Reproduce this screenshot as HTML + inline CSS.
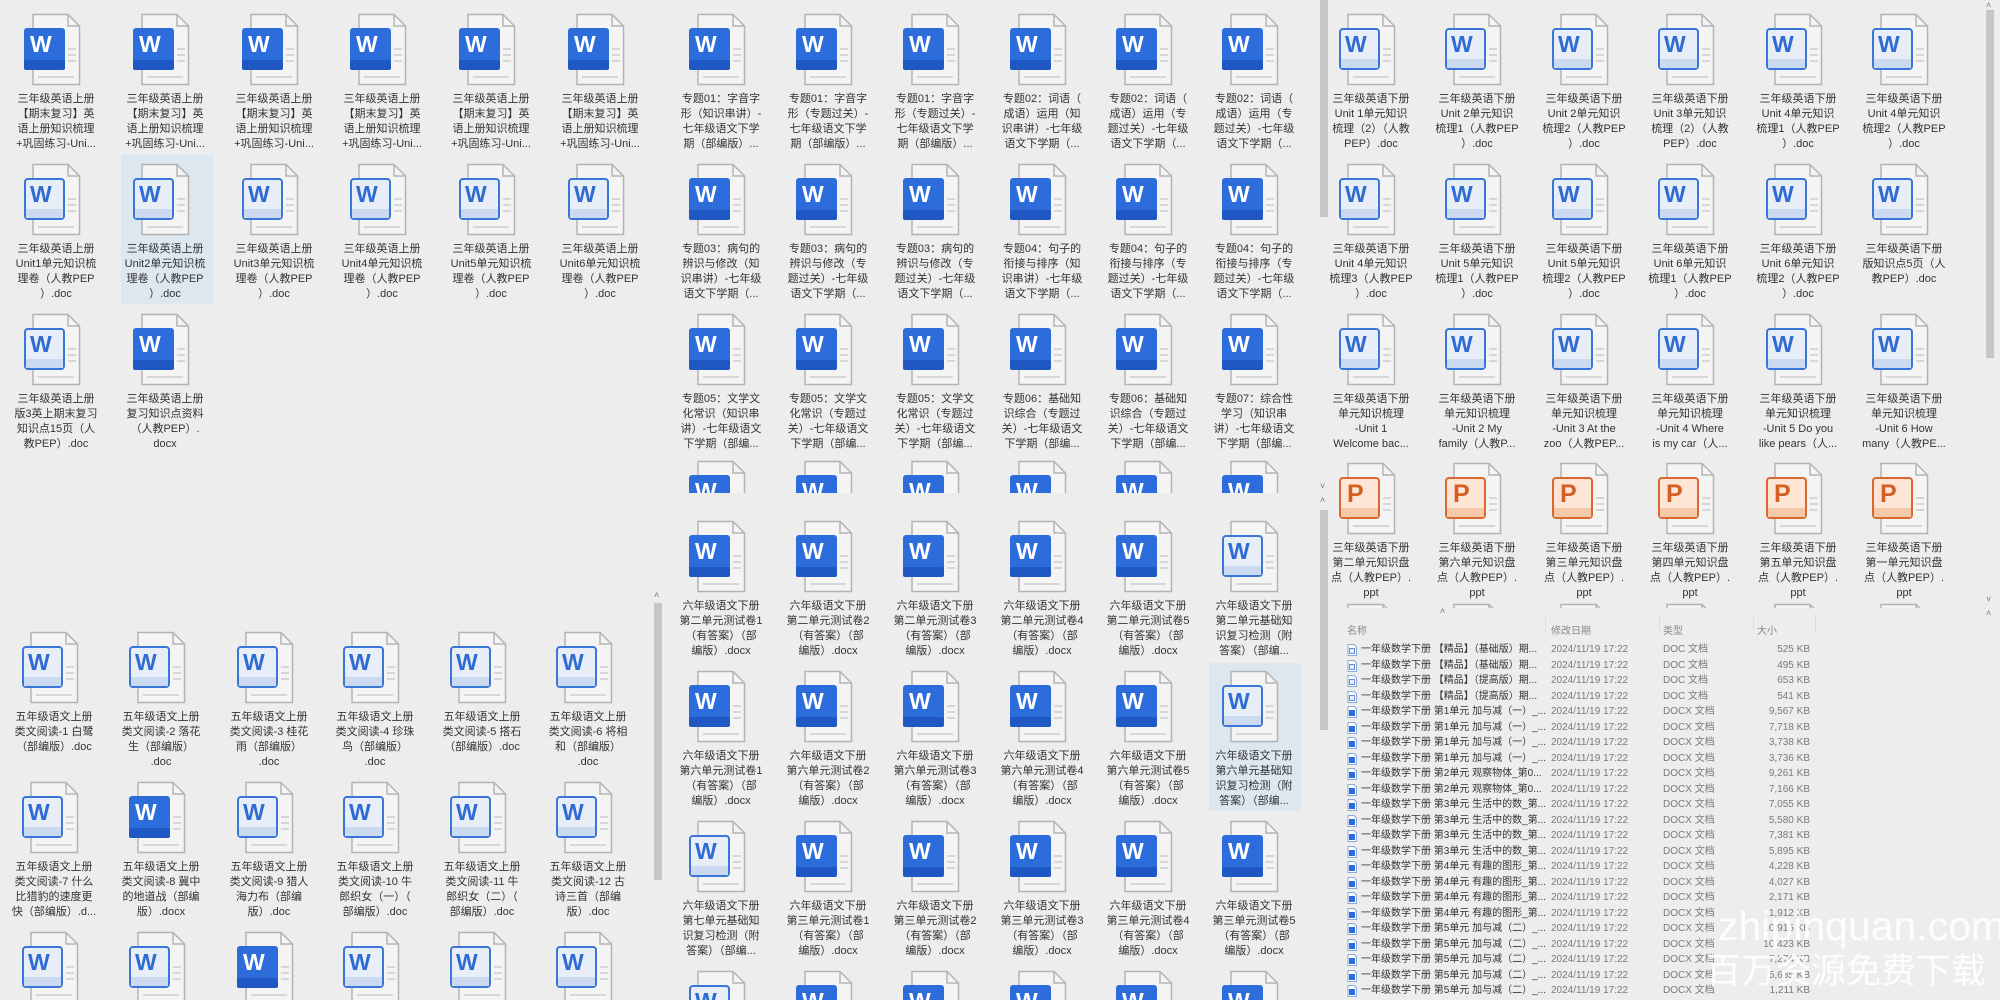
<!DOCTYPE html>
<html><head><meta charset="utf-8"><style>
*{margin:0;padding:0;box-sizing:border-box}
html,body{width:2000px;height:1000px;overflow:hidden}
body{background:#ededed;position:relative;font-family:"Liberation Sans","Noto Sans CJK SC",sans-serif;color:#333}
.c{position:absolute;overflow:hidden}
.i{position:absolute;width:108px;height:150px}
.i svg{position:absolute;left:21px;top:0;width:66px;height:73px}
.i p{position:absolute;top:79px;left:0;width:108px;text-align:center;font-size:11px;line-height:15px;white-space:nowrap}
.sel{position:absolute;background:#dde7f0}
.sb{position:absolute;background:#c6c6c6;width:8px}
.ar{position:absolute;font-size:9px;color:#777}
.hd{position:absolute;top:622px;font-size:10px;color:#8a8a8a}
.r{position:absolute;left:1347px;height:15px;line-height:15px;font-size:10px;white-space:nowrap;width:470px}
.r svg{position:absolute;left:0;top:2px;width:10px;height:12px}
.r .n{position:absolute;left:14px;color:#333}
.r .d{position:absolute;left:204px;color:#7a7a7a}
.r .t{position:absolute;left:316px;color:#7a7a7a}
.r .z{position:absolute;right:7px;color:#7a7a7a}
.sep{position:absolute;top:614px;width:1px;height:18px;background:#ddd}
</style></head><body>
<svg width="0" height="0" style="position:absolute"><defs>
<symbol id="pg" viewBox="0 0 66 73"><path d="M10 1.5H45L56.5 13V71.5H10Z" fill="#f4f4f4" stroke="#b3b3b3" stroke-width="1.5"/><path d="M45 1.5V13H56.5" fill="none" stroke="#b3b3b3" stroke-width="1.5"/><path d="M45 36h8M45 42h8M45 48h8M15 64h36" stroke="#d6d6d6" stroke-width="2"/></symbol>
<symbol id="ws" viewBox="0 0 66 73"><use href="#pg"/><rect x="1" y="15" width="41" height="42" rx="3" fill="#2c6ddb"/><rect x="1" y="47" width="41" height="10" rx="2" fill="#1f58c2"/><text x="7" y="39" font-family="Liberation Sans" font-weight="bold" font-size="23" fill="#fff">W</text></symbol>
<symbol id="wo" viewBox="0 0 66 73"><use href="#pg"/><rect x="2" y="16" width="39" height="40" rx="3" fill="#e8eef8" stroke="#3a76d8" stroke-width="2"/><rect x="3" y="46" width="37" height="9" fill="#cbdaf1"/><text x="7" y="39" font-family="Liberation Sans" font-weight="bold" font-size="23" fill="#2f6bd0">W</text></symbol>
<symbol id="pp" viewBox="0 0 66 73"><use href="#pg"/><rect x="2" y="16" width="39" height="40" rx="3" fill="#fde6d6" stroke="#d9692f" stroke-width="2"/><rect x="3" y="46" width="37" height="9" fill="#f6c8aa"/><text x="9" y="40" font-family="Liberation Sans" font-weight="bold" font-size="25" fill="#d65e22">P</text></symbol>
<symbol id="sd" viewBox="0 0 10 12"><path d="M1 .5H7L9.5 3V11.5H1Z" fill="#fff" stroke="#8aa8d8"/><rect x="2" y="4" width="6" height="6" fill="#2c6ddb"/></symbol>
<symbol id="so" viewBox="0 0 10 12"><path d="M1 .5H7L9.5 3V11.5H1Z" fill="#fff" stroke="#8aa8d8"/><rect x="2.5" y="4.5" width="5" height="5" fill="#e8eef8" stroke="#3a76d8" stroke-width=".8"/></symbol>
</defs></svg>

<!-- top-left -->
<div class="c" style="left:0;top:0;width:676px;height:600px">
<div class="sel" style="left:121px;top:155px;width:92px;height:149px"></div>
<div class="i" style="left:2px;top:13px"><svg><use href="#ws"/></svg><p>三年级英语上册<br>【期末复习】英<br>语上册知识梳理<br>+巩固练习-Uni...</p></div>
<div class="i" style="left:111px;top:13px"><svg><use href="#ws"/></svg><p>三年级英语上册<br>【期末复习】英<br>语上册知识梳理<br>+巩固练习-Uni...</p></div>
<div class="i" style="left:220px;top:13px"><svg><use href="#ws"/></svg><p>三年级英语上册<br>【期末复习】英<br>语上册知识梳理<br>+巩固练习-Uni...</p></div>
<div class="i" style="left:328px;top:13px"><svg><use href="#ws"/></svg><p>三年级英语上册<br>【期末复习】英<br>语上册知识梳理<br>+巩固练习-Uni...</p></div>
<div class="i" style="left:437px;top:13px"><svg><use href="#ws"/></svg><p>三年级英语上册<br>【期末复习】英<br>语上册知识梳理<br>+巩固练习-Uni...</p></div>
<div class="i" style="left:546px;top:13px"><svg><use href="#ws"/></svg><p>三年级英语上册<br>【期末复习】英<br>语上册知识梳理<br>+巩固练习-Uni...</p></div>
<div class="i" style="left:2px;top:163px"><svg><use href="#wo"/></svg><p>三年级英语上册<br>Unit1单元知识梳<br>理卷（人教PEP<br>）.doc</p></div>
<div class="i" style="left:111px;top:163px"><svg><use href="#wo"/></svg><p>三年级英语上册<br>Unit2单元知识梳<br>理卷（人教PEP<br>）.doc</p></div>
<div class="i" style="left:220px;top:163px"><svg><use href="#wo"/></svg><p>三年级英语上册<br>Unit3单元知识梳<br>理卷（人教PEP<br>）.doc</p></div>
<div class="i" style="left:328px;top:163px"><svg><use href="#wo"/></svg><p>三年级英语上册<br>Unit4单元知识梳<br>理卷（人教PEP<br>）.doc</p></div>
<div class="i" style="left:437px;top:163px"><svg><use href="#wo"/></svg><p>三年级英语上册<br>Unit5单元知识梳<br>理卷（人教PEP<br>）.doc</p></div>
<div class="i" style="left:546px;top:163px"><svg><use href="#wo"/></svg><p>三年级英语上册<br>Unit6单元知识梳<br>理卷（人教PEP<br>）.doc</p></div>
<div class="i" style="left:2px;top:313px"><svg><use href="#wo"/></svg><p>三年级英语上册<br>版3英上期末复习<br>知识点15页（人<br>教PEP）.doc</p></div>
<div class="i" style="left:111px;top:313px"><svg><use href="#ws"/></svg><p>三年级英语上册<br>复习知识点资料<br>（人教PEP）.<br>docx</p></div>
</div>

<!-- top-middle -->
<div class="c" style="left:676px;top:0;width:642px;height:493px">
<div class="i" style="left:-9px;top:13px"><svg><use href="#ws"/></svg><p>专题01：字音字<br>形（知识串讲）-<br>七年级语文下学<br>期（部编版）...</p></div>
<div class="i" style="left:98px;top:13px"><svg><use href="#ws"/></svg><p>专题01：字音字<br>形（专题过关）-<br>七年级语文下学<br>期（部编版）...</p></div>
<div class="i" style="left:205px;top:13px"><svg><use href="#ws"/></svg><p>专题01：字音字<br>形（专题过关）-<br>七年级语文下学<br>期（部编版）...</p></div>
<div class="i" style="left:312px;top:13px"><svg><use href="#ws"/></svg><p>专题02：词语（<br>成语）运用（知<br>识串讲）-七年级<br>语文下学期（...</p></div>
<div class="i" style="left:418px;top:13px"><svg><use href="#ws"/></svg><p>专题02：词语（<br>成语）运用（专<br>题过关）-七年级<br>语文下学期（...</p></div>
<div class="i" style="left:524px;top:13px"><svg><use href="#ws"/></svg><p>专题02：词语（<br>成语）运用（专<br>题过关）-七年级<br>语文下学期（...</p></div>
<div class="i" style="left:-9px;top:163px"><svg><use href="#ws"/></svg><p>专题03：病句的<br>辨识与修改（知<br>识串讲）-七年级<br>语文下学期（...</p></div>
<div class="i" style="left:98px;top:163px"><svg><use href="#ws"/></svg><p>专题03：病句的<br>辨识与修改（专<br>题过关）-七年级<br>语文下学期（...</p></div>
<div class="i" style="left:205px;top:163px"><svg><use href="#ws"/></svg><p>专题03：病句的<br>辨识与修改（专<br>题过关）-七年级<br>语文下学期（...</p></div>
<div class="i" style="left:312px;top:163px"><svg><use href="#ws"/></svg><p>专题04：句子的<br>衔接与排序（知<br>识串讲）-七年级<br>语文下学期（...</p></div>
<div class="i" style="left:418px;top:163px"><svg><use href="#ws"/></svg><p>专题04：句子的<br>衔接与排序（专<br>题过关）-七年级<br>语文下学期（...</p></div>
<div class="i" style="left:524px;top:163px"><svg><use href="#ws"/></svg><p>专题04：句子的<br>衔接与排序（专<br>题过关）-七年级<br>语文下学期（...</p></div>
<div class="i" style="left:-9px;top:313px"><svg><use href="#ws"/></svg><p>专题05：文学文<br>化常识（知识串<br>讲）-七年级语文<br>下学期（部编...</p></div>
<div class="i" style="left:98px;top:313px"><svg><use href="#ws"/></svg><p>专题05：文学文<br>化常识（专题过<br>关）-七年级语文<br>下学期（部编...</p></div>
<div class="i" style="left:205px;top:313px"><svg><use href="#ws"/></svg><p>专题05：文学文<br>化常识（专题过<br>关）-七年级语文<br>下学期（部编...</p></div>
<div class="i" style="left:312px;top:313px"><svg><use href="#ws"/></svg><p>专题06：基础知<br>识综合（专题过<br>关）-七年级语文<br>下学期（部编...</p></div>
<div class="i" style="left:418px;top:313px"><svg><use href="#ws"/></svg><p>专题06：基础知<br>识综合（专题过<br>关）-七年级语文<br>下学期（部编...</p></div>
<div class="i" style="left:524px;top:313px"><svg><use href="#ws"/></svg><p>专题07：综合性<br>学习（知识串<br>讲）-七年级语文<br>下学期（部编...</p></div>
<div class="i" style="left:-9px;top:460px"><svg><use href="#ws"/></svg></div>
<div class="i" style="left:98px;top:460px"><svg><use href="#ws"/></svg></div>
<div class="i" style="left:205px;top:460px"><svg><use href="#ws"/></svg></div>
<div class="i" style="left:312px;top:460px"><svg><use href="#ws"/></svg></div>
<div class="i" style="left:418px;top:460px"><svg><use href="#ws"/></svg></div>
<div class="i" style="left:524px;top:460px"><svg><use href="#ws"/></svg></div>
</div>

<!-- bottom-left -->
<div class="c" style="left:0;top:605px;width:648px;height:395px">
<div class="i" style="left:0;top:26px"><svg><use href="#wo"/></svg><p>五年级语文上册<br>类文阅读-1 白鹭<br>（部编版）.doc</p></div>
<div class="i" style="left:107px;top:26px"><svg><use href="#wo"/></svg><p>五年级语文上册<br>类文阅读-2 落花<br>生（部编版）<br>.doc</p></div>
<div class="i" style="left:215px;top:26px"><svg><use href="#wo"/></svg><p>五年级语文上册<br>类文阅读-3 桂花<br>雨（部编版）<br>.doc</p></div>
<div class="i" style="left:321px;top:26px"><svg><use href="#wo"/></svg><p>五年级语文上册<br>类文阅读-4 珍珠<br>鸟（部编版）<br>.doc</p></div>
<div class="i" style="left:428px;top:26px"><svg><use href="#wo"/></svg><p>五年级语文上册<br>类文阅读-5 搭石<br>（部编版）.doc</p></div>
<div class="i" style="left:534px;top:26px"><svg><use href="#wo"/></svg><p>五年级语文上册<br>类文阅读-6 将相<br>和（部编版）<br>.doc</p></div>
<div class="i" style="left:0;top:176px"><svg><use href="#wo"/></svg><p>五年级语文上册<br>类文阅读-7 什么<br>比猎豹的速度更<br>快（部编版）.d...</p></div>
<div class="i" style="left:107px;top:176px"><svg><use href="#ws"/></svg><p>五年级语文上册<br>类文阅读-8 冀中<br>的地道战（部编<br>版）.docx</p></div>
<div class="i" style="left:215px;top:176px"><svg><use href="#wo"/></svg><p>五年级语文上册<br>类文阅读-9 猎人<br>海力布（部编<br>版）.doc</p></div>
<div class="i" style="left:321px;top:176px"><svg><use href="#wo"/></svg><p>五年级语文上册<br>类文阅读-10 牛<br>郎织女（一）（<br>部编版）.doc</p></div>
<div class="i" style="left:428px;top:176px"><svg><use href="#wo"/></svg><p>五年级语文上册<br>类文阅读-11 牛<br>郎织女（二）（<br>部编版）.doc</p></div>
<div class="i" style="left:534px;top:176px"><svg><use href="#wo"/></svg><p>五年级语文上册<br>类文阅读-12 古<br>诗三首（部编<br>版）.doc</p></div>
<div class="i" style="left:0;top:326px"><svg><use href="#wo"/></svg></div>
<div class="i" style="left:107px;top:326px"><svg><use href="#wo"/></svg></div>
<div class="i" style="left:215px;top:326px"><svg><use href="#ws"/></svg></div>
<div class="i" style="left:321px;top:326px"><svg><use href="#wo"/></svg></div>
<div class="i" style="left:428px;top:326px"><svg><use href="#wo"/></svg></div>
<div class="i" style="left:534px;top:326px"><svg><use href="#wo"/></svg></div>
</div>
<div class="ar" style="left:654px;top:590px">˄</div>
<div class="sb" style="left:654px;top:603px;height:277px"></div>

<!-- bottom-middle -->
<div class="c" style="left:676px;top:495px;width:636px;height:505px">
<div class="sel" style="left:533px;top:168px;width:92px;height:148px"></div>
<div class="i" style="left:-9px;top:25px"><svg><use href="#ws"/></svg><p>六年级语文下册<br>第二单元测试卷1<br>（有答案）（部<br>编版）.docx</p></div>
<div class="i" style="left:98px;top:25px"><svg><use href="#ws"/></svg><p>六年级语文下册<br>第二单元测试卷2<br>（有答案）（部<br>编版）.docx</p></div>
<div class="i" style="left:205px;top:25px"><svg><use href="#ws"/></svg><p>六年级语文下册<br>第二单元测试卷3<br>（有答案）（部<br>编版）.docx</p></div>
<div class="i" style="left:312px;top:25px"><svg><use href="#ws"/></svg><p>六年级语文下册<br>第二单元测试卷4<br>（有答案）（部<br>编版）.docx</p></div>
<div class="i" style="left:418px;top:25px"><svg><use href="#ws"/></svg><p>六年级语文下册<br>第二单元测试卷5<br>（有答案）（部<br>编版）.docx</p></div>
<div class="i" style="left:524px;top:25px"><svg><use href="#wo"/></svg><p>六年级语文下册<br>第二单元基础知<br>识复习检测（附<br>答案）（部编...</p></div>
<div class="i" style="left:-9px;top:175px"><svg><use href="#ws"/></svg><p>六年级语文下册<br>第六单元测试卷1<br>（有答案）（部<br>编版）.docx</p></div>
<div class="i" style="left:98px;top:175px"><svg><use href="#ws"/></svg><p>六年级语文下册<br>第六单元测试卷2<br>（有答案）（部<br>编版）.docx</p></div>
<div class="i" style="left:205px;top:175px"><svg><use href="#ws"/></svg><p>六年级语文下册<br>第六单元测试卷3<br>（有答案）（部<br>编版）.docx</p></div>
<div class="i" style="left:312px;top:175px"><svg><use href="#ws"/></svg><p>六年级语文下册<br>第六单元测试卷4<br>（有答案）（部<br>编版）.docx</p></div>
<div class="i" style="left:418px;top:175px"><svg><use href="#ws"/></svg><p>六年级语文下册<br>第六单元测试卷5<br>（有答案）（部<br>编版）.docx</p></div>
<div class="i" style="left:524px;top:175px"><svg><use href="#wo"/></svg><p>六年级语文下册<br>第六单元基础知<br>识复习检测（附<br>答案）（部编...</p></div>
<div class="i" style="left:-9px;top:325px"><svg><use href="#wo"/></svg><p>六年级语文下册<br>第七单元基础知<br>识复习检测（附<br>答案）（部编...</p></div>
<div class="i" style="left:98px;top:325px"><svg><use href="#ws"/></svg><p>六年级语文下册<br>第三单元测试卷1<br>（有答案）（部<br>编版）.docx</p></div>
<div class="i" style="left:205px;top:325px"><svg><use href="#ws"/></svg><p>六年级语文下册<br>第三单元测试卷2<br>（有答案）（部<br>编版）.docx</p></div>
<div class="i" style="left:312px;top:325px"><svg><use href="#ws"/></svg><p>六年级语文下册<br>第三单元测试卷3<br>（有答案）（部<br>编版）.docx</p></div>
<div class="i" style="left:418px;top:325px"><svg><use href="#ws"/></svg><p>六年级语文下册<br>第三单元测试卷4<br>（有答案）（部<br>编版）.docx</p></div>
<div class="i" style="left:524px;top:325px"><svg><use href="#ws"/></svg><p>六年级语文下册<br>第三单元测试卷5<br>（有答案）（部<br>编版）.docx</p></div>
<div class="i" style="left:-9px;top:475px"><svg><use href="#wo"/></svg></div>
<div class="i" style="left:98px;top:475px"><svg><use href="#ws"/></svg></div>
<div class="i" style="left:205px;top:475px"><svg><use href="#ws"/></svg></div>
<div class="i" style="left:312px;top:475px"><svg><use href="#ws"/></svg></div>
<div class="i" style="left:418px;top:475px"><svg><use href="#ws"/></svg></div>
<div class="i" style="left:524px;top:475px"><svg><use href="#ws"/></svg></div>
</div>
<div class="sb" style="left:1320px;top:0;height:217px"></div>
<div class="ar" style="left:1320px;top:481px">˅</div>
<div class="ar" style="left:1320px;top:495px">˄</div>
<div class="sb" style="left:1320px;top:510px;height:220px"></div>

<!-- right-top -->
<div class="c" style="left:1330px;top:0;width:650px;height:608px">
<div class="i" style="left:-13px;top:13px"><svg><use href="#wo"/></svg><p>三年级英语下册<br>Unit 1单元知识<br>梳理（2）（人教<br>PEP）.doc</p></div>
<div class="i" style="left:93px;top:13px"><svg><use href="#wo"/></svg><p>三年级英语下册<br>Unit 2单元知识<br>梳理1（人教PEP<br>）.doc</p></div>
<div class="i" style="left:200px;top:13px"><svg><use href="#wo"/></svg><p>三年级英语下册<br>Unit 2单元知识<br>梳理2（人教PEP<br>）.doc</p></div>
<div class="i" style="left:306px;top:13px"><svg><use href="#wo"/></svg><p>三年级英语下册<br>Unit 3单元知识<br>梳理（2）（人教<br>PEP）.doc</p></div>
<div class="i" style="left:414px;top:13px"><svg><use href="#wo"/></svg><p>三年级英语下册<br>Unit 4单元知识<br>梳理1（人教PEP<br>）.doc</p></div>
<div class="i" style="left:520px;top:13px"><svg><use href="#wo"/></svg><p>三年级英语下册<br>Unit 4单元知识<br>梳理2（人教PEP<br>）.doc</p></div>
<div class="i" style="left:-13px;top:163px"><svg><use href="#wo"/></svg><p>三年级英语下册<br>Unit 4单元知识<br>梳理3（人教PEP<br>）.doc</p></div>
<div class="i" style="left:93px;top:163px"><svg><use href="#wo"/></svg><p>三年级英语下册<br>Unit 5单元知识<br>梳理1（人教PEP<br>）.doc</p></div>
<div class="i" style="left:200px;top:163px"><svg><use href="#wo"/></svg><p>三年级英语下册<br>Unit 5单元知识<br>梳理2（人教PEP<br>）.doc</p></div>
<div class="i" style="left:306px;top:163px"><svg><use href="#wo"/></svg><p>三年级英语下册<br>Unit 6单元知识<br>梳理1（人教PEP<br>）.doc</p></div>
<div class="i" style="left:414px;top:163px"><svg><use href="#wo"/></svg><p>三年级英语下册<br>Unit 6单元知识<br>梳理2（人教PEP<br>）.doc</p></div>
<div class="i" style="left:520px;top:163px"><svg><use href="#wo"/></svg><p>三年级英语下册<br>版知识点5页（人<br>教PEP）.doc</p></div>
<div class="i" style="left:-13px;top:313px"><svg><use href="#wo"/></svg><p>三年级英语下册<br>单元知识梳理<br>-Unit 1<br>Welcome bac...</p></div>
<div class="i" style="left:93px;top:313px"><svg><use href="#wo"/></svg><p>三年级英语下册<br>单元知识梳理<br>-Unit 2 My<br>family（人教P...</p></div>
<div class="i" style="left:200px;top:313px"><svg><use href="#wo"/></svg><p>三年级英语下册<br>单元知识梳理<br>-Unit 3 At the<br>zoo（人教PEP...</p></div>
<div class="i" style="left:306px;top:313px"><svg><use href="#wo"/></svg><p>三年级英语下册<br>单元知识梳理<br>-Unit 4 Where<br>is my car（人...</p></div>
<div class="i" style="left:414px;top:313px"><svg><use href="#wo"/></svg><p>三年级英语下册<br>单元知识梳理<br>-Unit 5 Do you<br>like pears（人...</p></div>
<div class="i" style="left:520px;top:313px"><svg><use href="#wo"/></svg><p>三年级英语下册<br>单元知识梳理<br>-Unit 6 How<br>many（人教PE...</p></div>
<div class="i" style="left:-13px;top:462px"><svg><use href="#pp"/></svg><p>三年级英语下册<br>第二单元知识盘<br>点（人教PEP）.<br>ppt</p></div>
<div class="i" style="left:93px;top:462px"><svg><use href="#pp"/></svg><p>三年级英语下册<br>第六单元知识盘<br>点（人教PEP）.<br>ppt</p></div>
<div class="i" style="left:200px;top:462px"><svg><use href="#pp"/></svg><p>三年级英语下册<br>第三单元知识盘<br>点（人教PEP）.<br>ppt</p></div>
<div class="i" style="left:306px;top:462px"><svg><use href="#pp"/></svg><p>三年级英语下册<br>第四单元知识盘<br>点（人教PEP）.<br>ppt</p></div>
<div class="i" style="left:414px;top:462px"><svg><use href="#pp"/></svg><p>三年级英语下册<br>第五单元知识盘<br>点（人教PEP）.<br>ppt</p></div>
<div class="i" style="left:520px;top:462px"><svg><use href="#pp"/></svg><p>三年级英语下册<br>第一单元知识盘<br>点（人教PEP）.<br>ppt</p></div>
<div class="i" style="left:-13px;top:603px"><svg><use href="#pg"/></svg></div>
<div class="i" style="left:93px;top:603px"><svg><use href="#pg"/></svg></div>
<div class="i" style="left:200px;top:603px"><svg><use href="#pg"/></svg></div>
<div class="i" style="left:306px;top:603px"><svg><use href="#pg"/></svg></div>
<div class="i" style="left:414px;top:603px"><svg><use href="#pg"/></svg></div>
<div class="i" style="left:520px;top:603px"><svg><use href="#pg"/></svg></div>
</div>
<div class="ar" style="left:1986px;top:0">˄</div>
<div class="sb" style="left:1986px;top:10px;height:348px"></div>
<div class="ar" style="left:1986px;top:594px">˅</div>
<div class="ar" style="left:1986px;top:608px">˄</div>

<!-- list -->
<div class="ar" style="left:1440px;top:606px">˄</div>
<div class="hd" style="left:1347px">名称</div>
<div class="hd" style="left:1551px">修改日期</div>
<div class="hd" style="left:1663px">类型</div>
<div class="hd" style="left:1757px">大小</div>
<div class="sep" style="left:1545px"></div><div class="sep" style="left:1659px"></div><div class="sep" style="left:1753px"></div><div class="sep" style="left:1815px"></div>

<div class="r" style="top:642px"><svg><use href="#so"/></svg><span class="n">一年级数学下册 【精品】（基础版）期...</span><span class="d">2024/11/19 17:22</span><span class="t">DOC 文档</span><span class="z">525 KB</span></div>
<div class="r" style="top:657.5px"><svg><use href="#so"/></svg><span class="n">一年级数学下册 【精品】（基础版）期...</span><span class="d">2024/11/19 17:22</span><span class="t">DOC 文档</span><span class="z">495 KB</span></div>
<div class="r" style="top:673px"><svg><use href="#so"/></svg><span class="n">一年级数学下册 【精品】（提高版）期...</span><span class="d">2024/11/19 17:22</span><span class="t">DOC 文档</span><span class="z">653 KB</span></div>
<div class="r" style="top:688.5px"><svg><use href="#so"/></svg><span class="n">一年级数学下册 【精品】（提高版）期...</span><span class="d">2024/11/19 17:22</span><span class="t">DOC 文档</span><span class="z">541 KB</span></div>
<div class="r" style="top:704px"><svg><use href="#sd"/></svg><span class="n">一年级数学下册 第1单元 加与减（一）_...</span><span class="d">2024/11/19 17:22</span><span class="t">DOCX 文档</span><span class="z">9,567 KB</span></div>
<div class="r" style="top:719.5px"><svg><use href="#sd"/></svg><span class="n">一年级数学下册 第1单元 加与减（一）_...</span><span class="d">2024/11/19 17:22</span><span class="t">DOCX 文档</span><span class="z">7,718 KB</span></div>
<div class="r" style="top:735px"><svg><use href="#sd"/></svg><span class="n">一年级数学下册 第1单元 加与减（一）_...</span><span class="d">2024/11/19 17:22</span><span class="t">DOCX 文档</span><span class="z">3,738 KB</span></div>
<div class="r" style="top:750.5px"><svg><use href="#sd"/></svg><span class="n">一年级数学下册 第1单元 加与减（一）_...</span><span class="d">2024/11/19 17:22</span><span class="t">DOCX 文档</span><span class="z">3,736 KB</span></div>
<div class="r" style="top:766px"><svg><use href="#sd"/></svg><span class="n">一年级数学下册 第2单元 观察物体_第0...</span><span class="d">2024/11/19 17:22</span><span class="t">DOCX 文档</span><span class="z">9,261 KB</span></div>
<div class="r" style="top:781.5px"><svg><use href="#sd"/></svg><span class="n">一年级数学下册 第2单元 观察物体_第0...</span><span class="d">2024/11/19 17:22</span><span class="t">DOCX 文档</span><span class="z">7,166 KB</span></div>
<div class="r" style="top:797px"><svg><use href="#sd"/></svg><span class="n">一年级数学下册 第3单元 生活中的数_第...</span><span class="d">2024/11/19 17:22</span><span class="t">DOCX 文档</span><span class="z">7,055 KB</span></div>
<div class="r" style="top:812.5px"><svg><use href="#sd"/></svg><span class="n">一年级数学下册 第3单元 生活中的数_第...</span><span class="d">2024/11/19 17:22</span><span class="t">DOCX 文档</span><span class="z">5,580 KB</span></div>
<div class="r" style="top:828px"><svg><use href="#sd"/></svg><span class="n">一年级数学下册 第3单元 生活中的数_第...</span><span class="d">2024/11/19 17:22</span><span class="t">DOCX 文档</span><span class="z">7,381 KB</span></div>
<div class="r" style="top:843.5px"><svg><use href="#sd"/></svg><span class="n">一年级数学下册 第3单元 生活中的数_第...</span><span class="d">2024/11/19 17:22</span><span class="t">DOCX 文档</span><span class="z">5,895 KB</span></div>
<div class="r" style="top:859px"><svg><use href="#sd"/></svg><span class="n">一年级数学下册 第4单元 有趣的图形_第...</span><span class="d">2024/11/19 17:22</span><span class="t">DOCX 文档</span><span class="z">4,228 KB</span></div>
<div class="r" style="top:874.5px"><svg><use href="#sd"/></svg><span class="n">一年级数学下册 第4单元 有趣的图形_第...</span><span class="d">2024/11/19 17:22</span><span class="t">DOCX 文档</span><span class="z">4,027 KB</span></div>
<div class="r" style="top:890px"><svg><use href="#sd"/></svg><span class="n">一年级数学下册 第4单元 有趣的图形_第...</span><span class="d">2024/11/19 17:22</span><span class="t">DOCX 文档</span><span class="z">2,171 KB</span></div>
<div class="r" style="top:905.5px"><svg><use href="#sd"/></svg><span class="n">一年级数学下册 第4单元 有趣的图形_第...</span><span class="d">2024/11/19 17:22</span><span class="t">DOCX 文档</span><span class="z">1,912 KB</span></div>
<div class="r" style="top:921px"><svg><use href="#sd"/></svg><span class="n">一年级数学下册 第5单元 加与减（二）_...</span><span class="d">2024/11/19 17:22</span><span class="t">DOCX 文档</span><span class="z">10,915 KB</span></div>
<div class="r" style="top:936.5px"><svg><use href="#sd"/></svg><span class="n">一年级数学下册 第5单元 加与减（二）_...</span><span class="d">2024/11/19 17:22</span><span class="t">DOCX 文档</span><span class="z">10,423 KB</span></div>
<div class="r" style="top:952px"><svg><use href="#sd"/></svg><span class="n">一年级数学下册 第5单元 加与减（二）_...</span><span class="d">2024/11/19 17:22</span><span class="t">DOCX 文档</span><span class="z">7,274 KB</span></div>
<div class="r" style="top:967.5px"><svg><use href="#sd"/></svg><span class="n">一年级数学下册 第5单元 加与减（二）_...</span><span class="d">2024/11/19 17:22</span><span class="t">DOCX 文档</span><span class="z">5,685 KB</span></div>
<div class="r" style="top:983px;height:17px;overflow:hidden"><svg><use href="#sd"/></svg><span class="n">一年级数学下册 第5单元 加与减（二）_...</span><span class="d">2024/11/19 17:22</span><span class="t">DOCX 文档</span><span class="z">1,211 KB</span></div>

<!-- watermark -->
<div style="position:absolute;left:1718px;top:902px;font-size:41px;line-height:48px;color:#fff;opacity:.92;white-space:nowrap;font-family:'Liberation Sans',sans-serif">zhipinquan.com</div>
<div style="position:absolute;left:1706px;top:950px;font-size:35px;line-height:44px;height:50px;overflow:hidden;color:#fff;opacity:.92;white-space:nowrap;font-family:'Liberation Sans','Noto Sans CJK SC',sans-serif">百万资源免费下载</div>
</body></html>
